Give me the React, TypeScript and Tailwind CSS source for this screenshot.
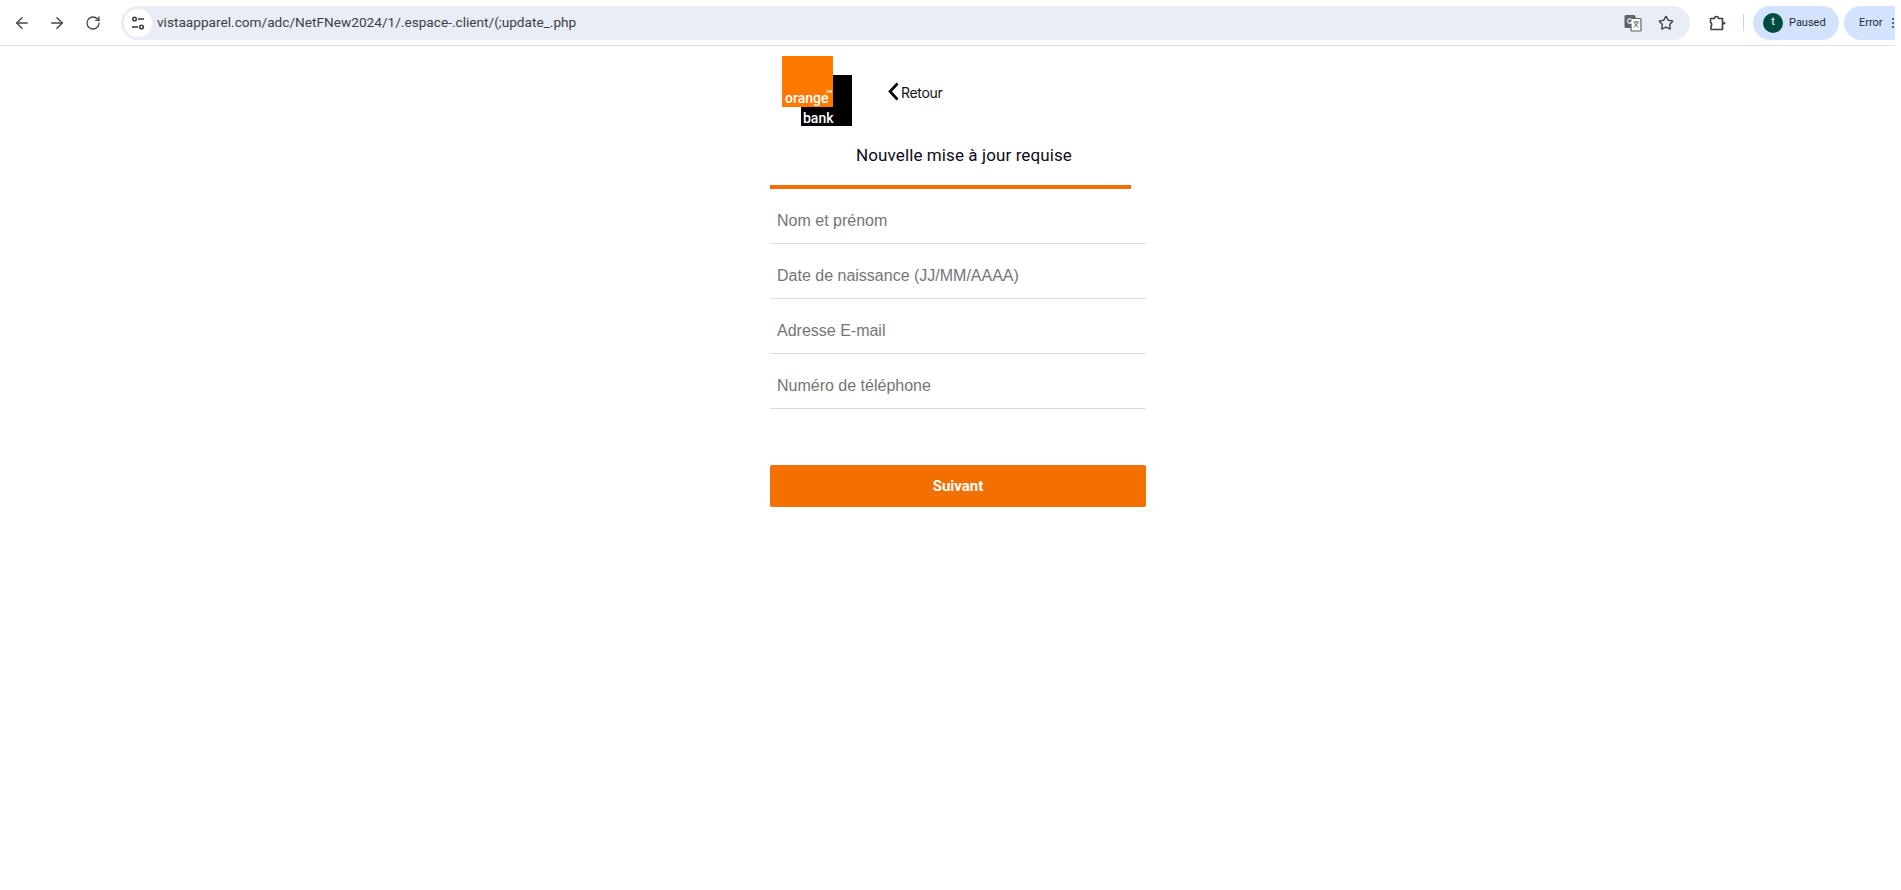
import { ArrowLeft, ArrowRight, RotateCw, Star } from "lucide-react";

const fields = [
  "Nom et prénom",
  "Date de naissance (JJ/MM/AAAA)",
  "Adresse E-mail",
  "Numéro de téléphone",
];

const TuneIcon = () => (
  <svg width="16" height="16" viewBox="0 0 16 16" fill="none" stroke="#3c4043" strokeWidth="1.6">
    <circle cx="4.5" cy="4" r="1.8" />
    <path d="M8 4h6" />
    <circle cx="11.5" cy="12" r="1.8" />
    <path d="M2 12h6" />
  </svg>
);

const TranslateIcon = () => (
  <svg width="18" height="18" viewBox="0 0 18 18">
    <rect x="0.5" y="1" width="11" height="13" rx="1.5" fill="#5f6368" />
    <rect x="7" y="4.5" width="10" height="12.5" rx="1" fill="#fff" stroke="#5f6368" strokeWidth="1.2" />
    <path d="M9.5 8h5.5M12 7v1M10 13.5l4-5M10.5 9l4 4.5" stroke="#5f6368" strokeWidth="1" fill="none" />
    <path d="M7.5 5.5a2.3 2.3 0 1 0 .5 2.5H6" stroke="#fff" strokeWidth="1.1" fill="none" />
  </svg>
);

const ExtensionIcon = () => (
  <svg width="18" height="18" viewBox="0 0 18 18" fill="none" stroke="#3c4043" strokeWidth="1.6" strokeLinejoin="round">
    <path d="M2.5 4.5H6.5a2 2 0 0 1 4 0H14.5V15.5H3V12.5Q4.6 10.2 2.5 8Z" />
    <circle cx="16" cy="9.2" r="1.3" fill="#3c4043" stroke="none" />
  </svg>
);

const Toolbar = () => (
  <div className="flex h-[46px] w-[1895px] items-center border-b border-[#dfe1e5] bg-white pl-[13px] font-['Roboto',sans-serif]">
    <ArrowLeft size={18} strokeWidth={1.9} className="text-[#474747]" />
    <ArrowRight size={18} strokeWidth={1.9} className="ml-[17px] text-[#474747]" />
    <RotateCw size={16} strokeWidth={1.9} className="ml-[19px] text-[#474747]" />
    <div className="ml-[20px] flex h-[34px] w-[1569px] shrink-0 items-center rounded-full bg-[#e9edf6] pl-[3px] pr-[16px]">
      <div className="flex h-[28px] w-[28px] items-center justify-center rounded-full bg-white">
        <TuneIcon />
      </div>
      <span className="ml-[5px] text-[13.65px] text-[#3c4043]">vistaapparel.com/adc/NetFNew2024/1/.espace-.client/(;update_.php</span>
      <div className="ml-auto flex items-center gap-[16px]">
        <TranslateIcon />
        <Star size={16} strokeWidth={2} className="text-[#3c4043]" />
      </div>
    </div>
    <div className="ml-[18px]">
      <ExtensionIcon />
    </div>
    <div className="ml-[17px] h-[17px] w-px bg-[#c4d4ee]" />
    <div className="ml-[9px] flex h-[34px] w-[86px] shrink-0 items-center rounded-full bg-[#d3e3fd] pl-[10px]">
      <div className="flex h-[20px] w-[20px] items-center justify-center rounded-full bg-[#004d40] text-[11px] text-white">t</div>
      <span className="ml-[6px] pt-[1px] text-[11px] text-[#1f2937]">Paused</span>
    </div>
    <div className="ml-[5px] flex h-[34px] flex-1 items-center overflow-hidden rounded-l-full bg-[#d3e3fd] pl-[15px]">
      <span className="pt-[1px] text-[11px] text-[#1f2937]">Error</span>
      <div className="ml-[9px] flex flex-col gap-[2px]">
        <div className="h-[2px] w-[2px] bg-[#5f6368]" />
        <div className="h-[2px] w-[2px] bg-[#5f6368]" />
        <div className="h-[2px] w-[2px] bg-[#5f6368]" />
      </div>
    </div>
  </div>
);

const Logo = () => (
  <div className="relative h-[70px] w-[70px] font-['Roboto',sans-serif] font-medium text-white">
    <div className="absolute left-[19px] top-[19px] flex h-[51px] w-[51px] items-end bg-black pl-[2px] text-[14px] leading-[16px]">
      bank
    </div>
    <div className="absolute left-0 top-0 flex h-[51px] w-[51px] items-end bg-[#ff7900] pl-[3px] text-[14px] leading-[17px]">
      orange
      <span className="absolute left-[44px] top-[34px] text-[4px] leading-none">TM</span>
    </div>
  </div>
);

export default function App() {
  return (
    <div className="min-h-[890px] bg-white">
      <Toolbar />
      <div className="ml-[770px] w-[376px] pt-[10px]">
        <div className="flex items-center pl-[12px]">
          <Logo />
          <div className="ml-[36px] flex items-center">
            <svg width="11" height="19" viewBox="0 0 11 19" fill="none" stroke="#000" strokeWidth="2.6">
              <path d="M9.5 1.5L2 9.5l7.5 8" />
            </svg>
            <span className="ml-[2px] pt-[2px] font-['Inter',sans-serif] text-[14px] tracking-[-0.3px] text-[#111]">Retour</span>
          </div>
        </div>
        <div className="mt-[19px] w-[361px] border-b-4 border-[#f37000] pb-[20px] pl-[27px] text-center font-['Roboto',sans-serif] text-[17px] leading-[20px] tracking-[0.1px] text-[#0b0b1a]">
          Nouvelle mise à jour requise
        </div>
        <div>
          {fields.map((f) => (
            <div key={f} className="flex h-[55px] items-end border-b border-[#dcdcdc] pb-[12px] pl-[7px] font-['Liberation_Sans',sans-serif] text-[16px] leading-[20px] text-[#757575]">
              {f}
            </div>
          ))}
        </div>
        <button className="mt-[56px] h-[42px] w-full rounded-[2px] bg-[#f37000] font-['Roboto',sans-serif] text-[15px] font-bold text-white">
          Suivant
        </button>
      </div>
    </div>
  );
}
